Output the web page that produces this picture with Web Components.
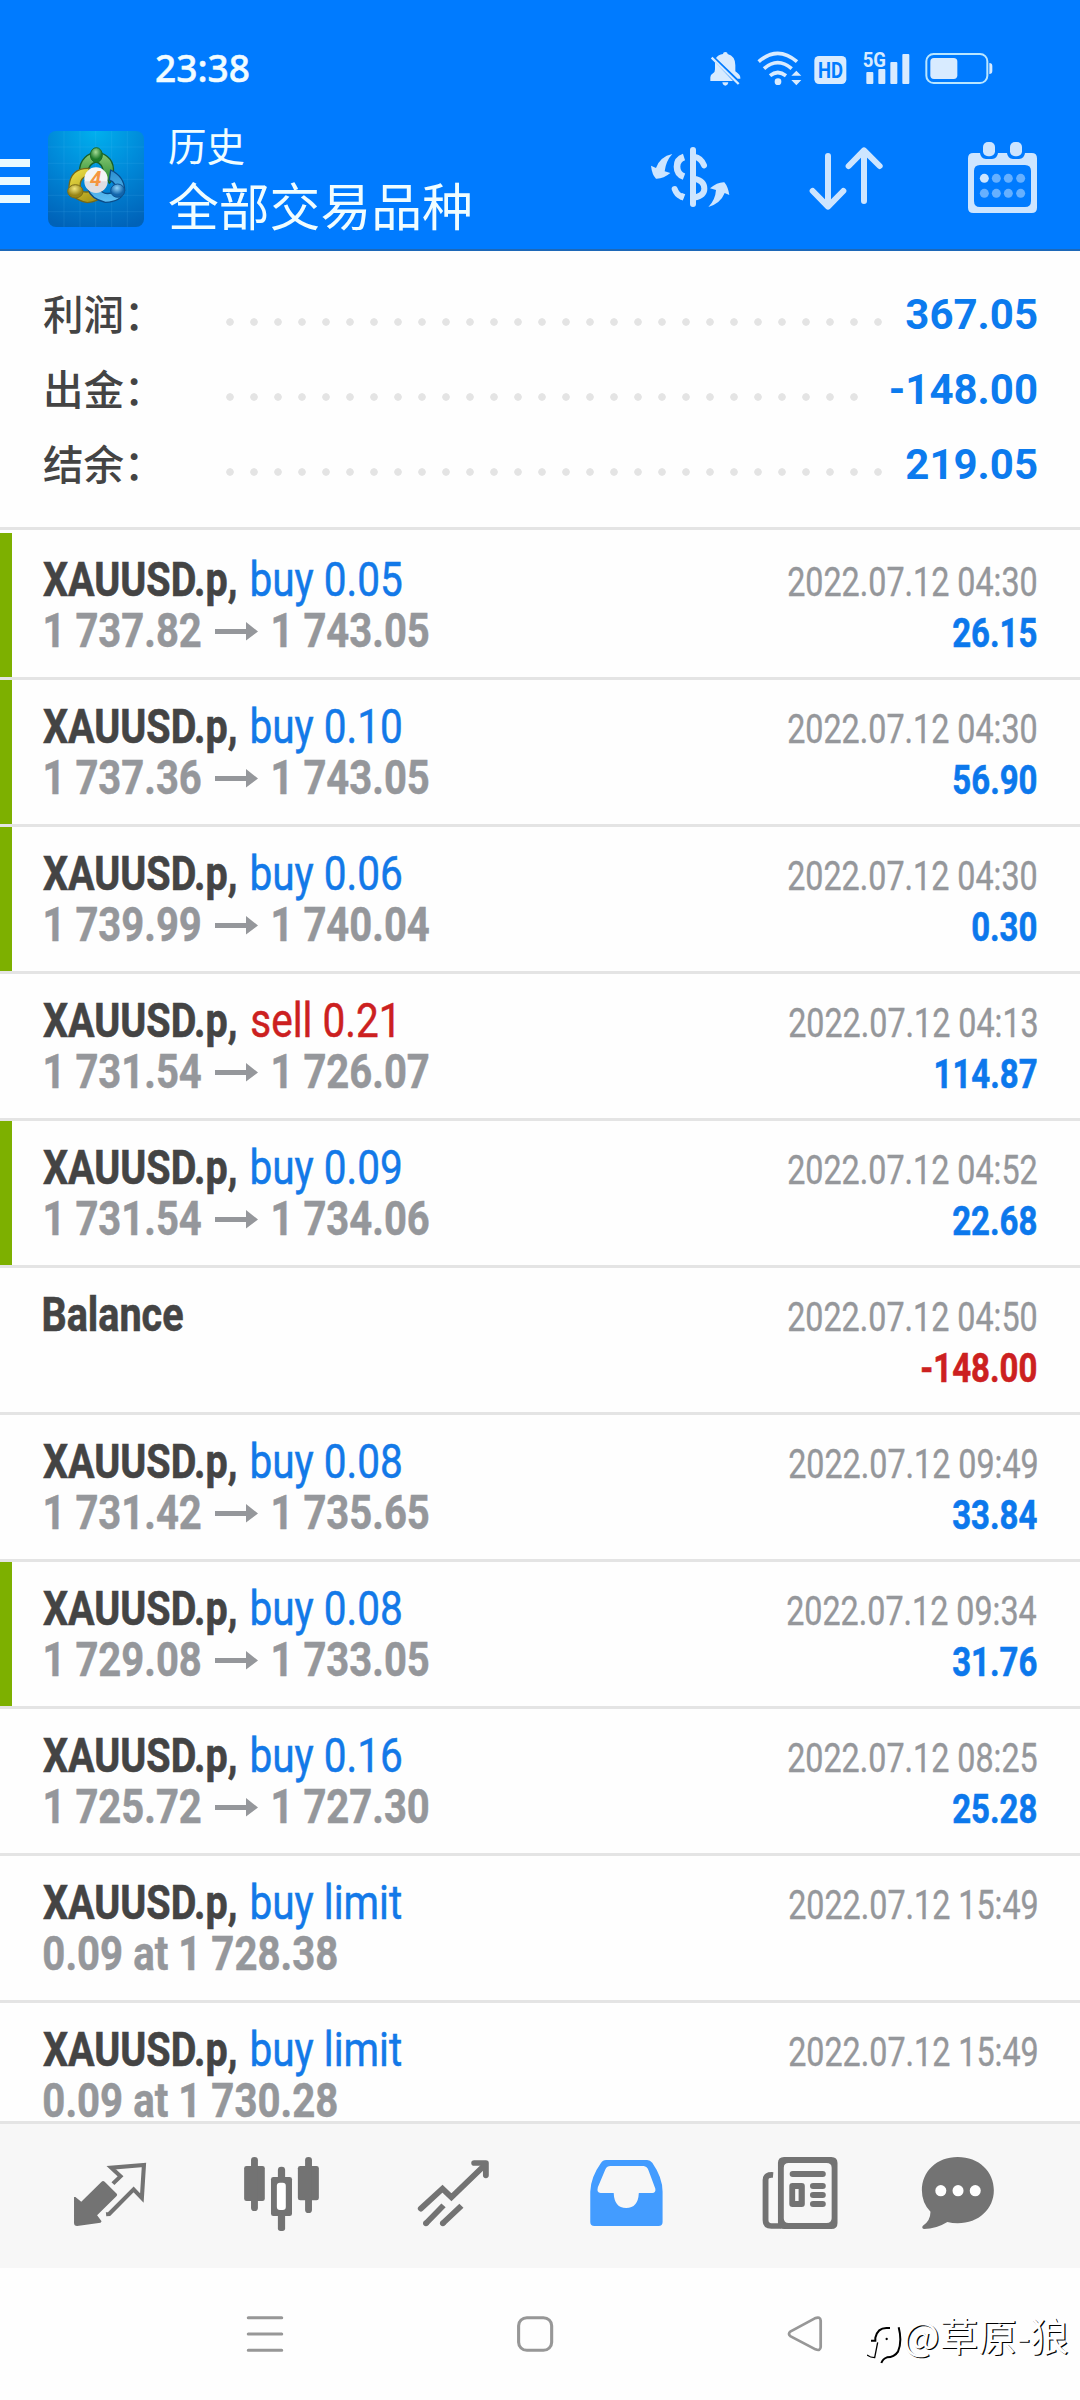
<!DOCTYPE html>
<html lang="zh-CN">
<head>
<meta charset="utf-8">
<title>历史</title>
<style>
html,body{margin:0;padding:0;background:#fefefe}
body{width:1080px;height:2400px;overflow:hidden;font-family:Roboto,"Noto Sans CJK SC",sans-serif}
</style>
</head>
<body>
<trade-app></trade-app>
<script>
/* Text scaled horizontally to a condensed width, anchored on its ink edge. */
const STYLES = {
  symbol: {font:'700 48px Roboto', sample:'XAUUSD.p,', width:193, line:51, color:'#444444', stroke:.6},
  side:   {font:'400 48px Roboto', sample:'buy 0.05', width:150, line:51, color:'inherit', stroke:.5},
  price:  {font:'700 48px Roboto', sample:'1 737.82', width:155.5, line:51, color:'#95979b', stroke:.5},
  note:   {font:'700 48px Roboto', sample:'0.09 at 1 730.28', width:293, line:51, color:'#95979b', stroke:.5},
  date:   {font:'400 40px Roboto', sample:'2022.07.12 04:30', width:248.5, line:51, color:'#95979b', stroke:.4},
  value:  {font:'700 40px Roboto', sample:'26.15', width:83.5, line:51, color:'inherit', stroke:.6},
  clock:  {font:'500 37.5px "Noto Sans"', sample:'23:38', width:92.5, line:44, color:'#f2fcff', stroke:.5}
};
const ctx = document.createElement('canvas').getContext('2d');
const ink = (font, text) => {
  ctx.font = font;
  const m = ctx.measureText(text);
  return {left:-m.actualBoundingBoxLeft, right:m.actualBoundingBoxRight, width:m.actualBoundingBoxLeft + m.actualBoundingBoxRight};
};
customElements.define('fit-text', class extends HTMLElement {
  connectedCallback() {
    const s = STYLES[this.getAttribute('kind')], text = this.getAttribute('text');
    const k = s.width / ink(s.font, s.sample).width, m = ink(s.font, text);
    this.attachShadow({mode:'open'}).innerHTML = `<style>
      :host{display:block;height:${s.line}px;width:${(m.width * k).toFixed(2)}px;color:${s.color};flex:none}
      span{display:inline-block;font:${s.font};line-height:${s.line}px;white-space:pre;transform-origin:0 0;-webkit-text-stroke:${s.stroke}px currentColor;
        transform:translateX(${(m.left * -k).toFixed(2)}px) scaleX(${k.toFixed(4)})}
    </style><span></span>`;
    this.shadowRoot.querySelector('span').textContent = text;
  }
});

customElements.define('status-bar', class extends HTMLElement {
  connectedCallback() {
    this.attachShadow({mode:'open'}).innerHTML = `<style>
      :host{display:flex;height:110px;box-sizing:border-box;padding:46px 0 0 156px}
      svg{display:block;margin-left:458px}
    </style>
    <fit-text kind="clock" text="23:38"></fit-text>
    <svg width="300" height="44" viewBox="260 48 900 132" fill="#d8ebff">
      <path d="M287 84 Q294 74 308 72 Q308 66 315 66 Q322 66 322 72 Q345 78 345 106 V124 Q360 134 360 143 V146 H352 Z"/>
      <path d="M284 96 L338 153 H270 V142 Q270 134 278 130 Q284 127 284 118Z"/>
      <path d="M306 157 H324 Q322 167 315 167 Q308 167 306 157Z"/>
      <path d="M274 83 L355 162" stroke="#d8ebff" stroke-width="7"/>
      <g fill="none" stroke="#d8ebff" stroke-width="11">
        <path d="M415 95 Q472 45 530 95"/><path d="M431 116 Q472 80 514 116"/><path d="M449 137 Q472 118 497 137"/>
      </g>
      <circle cx="473" cy="155" r="10"/><path d="M513 137 L528 122 L543 137Z M513 150 H543 L528 166Z"/>
      <rect x="582" y="78" width="96" height="84" rx="14"/>
      <text x="593" y="144" font-family="Roboto" font-weight="700" font-size="67" fill="#007bff" textLength="75" lengthAdjust="spacingAndGlyphs">HD</text>
      <text x="727" y="110" font-family="Roboto" font-weight="700" font-size="58" textLength="70" lengthAdjust="spacingAndGlyphs">5G</text>
      <rect x="738" y="126" width="21" height="36" rx="3"/><rect x="774" y="117" width="21" height="45" rx="3"/>
      <rect x="810" y="96" width="21" height="66" rx="3"/><rect x="846" y="72" width="21" height="90" rx="3"/>
      <rect x="918" y="72" width="183" height="87" rx="22" fill="none" stroke="#b9e6ff" stroke-width="6"/>
      <rect x="930" y="84" width="81" height="63" rx="11"/><path d="M1107 99 Q1116 99 1116 108 V123 Q1116 132 1107 132Z"/>
    </svg>`;
  }
});

customElements.define('app-logo', class extends HTMLElement {
  connectedCallback() {
    this.attachShadow({mode:'open'}).innerHTML = `<style>:host{display:block;width:96px;height:96px}svg{display:block}</style>
    <svg width="96" height="96" viewBox="54 33 288 288">
      <defs>
        <radialGradient id="bg" cx=".5" cy="0" r="1.05"><stop offset="0" stop-color="#00b0ee"/><stop offset=".5" stop-color="#0088d8"/><stop offset="1" stop-color="#0062b8"/></radialGradient>
        <linearGradient id="g" x2="0" y2="1"><stop offset="0" stop-color="#8fce78"/><stop offset="1" stop-color="#23852f"/></linearGradient>
        <linearGradient id="y" x2=".6" y2="1"><stop offset="0" stop-color="#f1e44a"/><stop offset="1" stop-color="#a89518"/></linearGradient>
        <linearGradient id="b" x2="0" y2="1"><stop offset="0" stop-color="#2b8fd0"/><stop offset="1" stop-color="#5fc0f5"/></linearGradient>
        <radialGradient id="gb" cx=".45" cy=".3"><stop offset="0" stop-color="#a5dc96"/><stop offset="1" stop-color="#1d7a2a"/></radialGradient>
        <radialGradient id="yb" cx=".45" cy=".3"><stop offset="0" stop-color="#f3e77d"/><stop offset="1" stop-color="#978416"/></radialGradient>
        <radialGradient id="bb" cx=".45" cy=".3"><stop offset="0" stop-color="#8fd3fa"/><stop offset="1" stop-color="#1265ac"/></radialGradient>
      </defs>
      <rect x="54" y="33" width="288" height="288" rx="24" fill="url(#bg)"/>
      <path d="M102 33V321M150 33V321M197 33V321M245 33V321M292 33V321M54 81H342M54 130H342M54 178H342M54 226H342M54 275H342" stroke="#6fd0ff" stroke-opacity=".18" stroke-width="2"/>
      <g stroke-linejoin="round" stroke-width="4">
        <path d="M150 170 Q140 112 198 94 Q256 108 250 160 Q248 182 238 190 L222 160 Q216 128 198 126 Q176 132 172 158Z" fill="url(#g)" stroke="#17602a"/>
        <path d="M178 145 Q122 143 117 198 Q118 236 172 248 Q202 246 222 226 L206 200 Q186 222 154 214 Q142 178 172 166Z" fill="url(#y)" stroke="#756818"/>
        <path d="M242 150 Q284 170 284 212 Q274 246 226 247 Q182 236 174 207 L208 208 Q224 228 254 216 Q262 188 238 180Z" fill="url(#b)" stroke="#0b4c89"/>
        <ellipse cx="199" cy="105" rx="18" ry="22" fill="url(#gb)" stroke="#1d6a29" stroke-width="3"/>
        <ellipse cx="136" cy="214" rx="23" ry="20" fill="url(#yb)" stroke="#7d6d16" stroke-width="3"/>
        <ellipse cx="263" cy="212" rx="21" ry="20" fill="url(#bb)" stroke="#0d5494" stroke-width="3"/>
      </g>
      <circle cx="198" cy="177" r="35" fill="#f4f4f6"/><path d="M163 184H233A35 35 0 0 1 163 184Z" fill="#dedde1"/>
      <text x="197" y="197" text-anchor="middle" font-family="Roboto" font-style="italic" font-weight="700" font-size="62" fill="#f5953f">4</text>
    </svg>`;
  }
});

customElements.define('app-header', class extends HTMLElement {
  connectedCallback() {
    this.attachShadow({mode:'open'}).innerHTML = `<style>
      :host{display:block;height:251px;box-sizing:border-box;background:#007bff;border-bottom:2px solid #1d68b8}
      .bar{display:flex;align-items:flex-start;height:139px}
      .menu{flex:none;width:48px;padding-top:49px;display:flex;flex-direction:column;gap:10px}
      .menu i{display:block;width:30px;height:8px;background:#eafaff}
      app-logo{margin-top:21px;flex:none}
      .titles{flex:none;margin-left:24px;width:460px;color:#f0fdff;font-family:"Noto Sans CJK SC",sans-serif}
      .t1{font-size:38.5px;line-height:50px;padding-top:9px}
      .t2{font-size:50.8px;line-height:60px;margin-top:5px}
      svg{display:block;flex:none;margin-top:26px}
    </style>
    <status-bar></status-bar>
    <div class="bar">
      <div class="menu"><i></i><i></i><i></i></div>
      <app-logo></app-logo>
      <div class="titles"><div class="t1">历史</div><div class="t2">全部交易品种</div></div>
      <svg width="440" height="84" viewBox="24 318 1320 252" fill="#cde5ff" stroke-linecap="round" stroke-linejoin="round">
        <path d="M157 372 Q120 380 108 414 L93 407 Q96 434 108 446 Q130 447 151 429 L134 424 Q138 392 157 372Z"/>
        <path d="M265 531 Q302 520 314 489 L328 495 Q324 470 313 457 Q292 456 270 475 L288 480 Q286 510 265 531Z"/>
        <g fill="none" stroke="#cde5ff" stroke-width="18">
          <path d="M219 360V522"/><path d="M222 380Q244 384 252 406"/>
          <path d="M222 446Q253 452 253 476Q253 497 222 503"/><path d="M164 477Q170 494 183 499"/>
          <path d="M192 381Q171 388 171 410Q171 432 192 440M182 498L192 502" stroke-linecap="butt" stroke-width="20"/>
          <path d="M624 378V529M578 483L624 530L670 483M732 513V362M686 408L732 361L779 408"/>
        </g>
        <path fill-rule="evenodd" d="M1060 369H1080Q1082 386 1098 387H1116Q1132 386 1134 369H1161Q1163 386 1179 387H1197Q1213 386 1215 369H1235Q1251 369 1251 385V533Q1251 549 1235 549H1060Q1044 549 1044 533V385Q1044 369 1060 369ZM1080 405Q1062 405 1062 423V513Q1062 531 1080 531H1215Q1233 531 1233 513V423Q1233 405 1215 405Z"/>
        <rect x="1089" y="336" width="36" height="43" rx="15"/><rect x="1170" y="336" width="36" height="43" rx="15"/>
        <circle cx="1093" cy="445" r="13.5"/>
        <g fill="#66b0ff"><circle cx="1129" cy="445" r="13.5"/><circle cx="1165" cy="445" r="13.5"/><circle cx="1202" cy="445" r="13.5"/>
        <circle cx="1093" cy="490" r="13.5"/><circle cx="1129" cy="490" r="13.5"/><circle cx="1165" cy="490" r="13.5"/><circle cx="1202" cy="490" r="13.5"/></g>
      </svg>
    </div>`;
  }
});

customElements.define('summary-row', class extends HTMLElement {
  connectedCallback() {
    this.attachShadow({mode:'open'}).innerHTML = `<style>
      :host{display:flex;align-items:center;height:75px;padding:0 42px 0 43px}
      .label{flex:none;width:175px;margin-top:-6px;font:500 40.5px/60px "Noto Sans CJK SC",sans-serif;color:#444}
      .dots{flex:none;width:${this.getAttribute('dots') * 24}px;height:24px;margin-top:13px;background:radial-gradient(circle at center,#e4e4e4 3.4px,transparent 4.1px) 0 0/24px 24px}
      .value{flex:1;margin-top:-2px;text-align:right;font:700 42px/60px Roboto;color:#0c7bee}
    </style>
    <div class="label"><slot></slot></div><div class="dots"></div><div class="value">${this.getAttribute('value')}</div>`;
  }
});

customElements.define('deal-row', class extends HTMLElement {
  connectedCallback() {
    const a = n => this.getAttribute(n);
    const t = (kind, text, cls = '') => text ? `<fit-text class="${cls}" kind="${kind}" text="${text}"></fit-text>` : '';
    this.attachShadow({mode:'open'}).innerHTML = `<style>
      :host{display:flex;height:147px;box-sizing:border-box;border-bottom:3px solid #e4e4e4;background:linear-gradient(${a('mark') !== null ? '#7db000,#7db000' : 'transparent,transparent'}) 0 0/12px 144px no-repeat}
      .left{flex:1;padding:21px 0 0 ${a('side') ? 42.5 : 44}px}
      .line{display:flex;height:51px}
      .side{margin-left:16px;color:${a('side')?.startsWith('sell') ? '#cc2020' : '#1379e8'}}
      .prices{margin-left:2.5px}
      .notes{margin-left:1.5px}
      .from{flex:0 0 156px}
      svg{display:block;margin:17px 15px 0 14px;flex:none}
      .right{display:flex;flex-direction:column;align-items:flex-end;padding:24px 43.5px 0 0}
      .value{color:${a('value')?.startsWith('-') ? '#cc2020' : '#0c78ec'}}
    </style>
    <div class="left">
      <div class="line">${t('symbol', a('name'))}${t('side', a('side'), 'side')}</div>
      ${a('from') ? `<div class="line prices">${t('price', a('from'), 'from')}<svg width="43" height="19" viewBox="0 0 43 19" fill="#95979b"><path d="M0 7H31V0L43 9.5L31 18.5V12H0Z"/></svg>${t('price', a('to'))}</div>` : ''}
      ${a('note') ? `<div class="line notes">${t('note', a('note'))}</div>` : ''}
    </div>
    <div class="right">${t('date', a('date'))}${t('value', a('value'), 'value')}</div>`;
  }
});

customElements.define('tab-bar', class extends HTMLElement {
  connectedCallback() {
    const cell = (x, body) => `<svg width="172" height="144" viewBox="${x} 72 499.5 432" preserveAspectRatio="none" fill="#737373">${body}</svg>`;
    this.attachShadow({mode:'open'}).innerHTML = `<style>
      :host{display:flex;height:147px;box-sizing:border-box;padding-left:24px;border-top:3px solid #e4e4e4;background:#f7f7f7}
      svg{display:block;flex:none}
    </style>
    ${cell(69.7, `<path d="M215 291H219L236 305L295 245Q299 241 304 245L339 281Q342 285 338 289L282 346L295 364L292 368L224 378Q215 378 215 369Z"/>
      <path d="M328 251L350 229L323 203L418 195L412 294L388 268L317 342L308 343" fill="none" stroke="#737373" stroke-width="12"/>`)}
    ${cell(569.2, `<rect x="709" y="198" width="60" height="105" rx="7"/><rect x="729" y="171" width="20" height="162" rx="10"/>
      <rect x="865" y="198" width="61" height="103" rx="7"/><rect x="886" y="171" width="20" height="168" rx="10"/>
      <rect x="807" y="200" width="21" height="45" rx="10"/><rect x="807" y="340" width="21" height="53" rx="8"/>
      <rect x="787" y="231" width="61" height="117" rx="7"/><rect x="804" y="248" width="26" height="82" rx="9" fill="#fff"/>`)}
    ${cell(1068.7, `<g fill="none" stroke="#737373" stroke-width="17" stroke-linecap="round"><path d="M1222 326L1285 266L1311 292L1405 198" stroke-linejoin="miter"/><path d="M1377 189H1411V226" stroke-linejoin="round"/></g>
      <g stroke="#737373" stroke-width="17"><path d="M1237 370L1288 316M1286 370L1340 317"/></g><circle cx="1237" cy="370" r="8.5"/><circle cx="1286" cy="370" r="8.5"/>`)}
    ${cell(0, `<path fill="#439cff" fill-rule="evenodd" d="M192 180H311Q320 180 326 188Q356 232 356 275V366Q356 378 344 378H158Q146 378 146 366V275Q147 232 177 189Q182 180 192 180ZM204 198Q195 198 190 208L168 262Q164 279 176 279H214Q216 324 250 324Q285 324 287 279H326Q337 278 335 266L315 211Q311 199 301 198Z"/>`)}
    ${cell(499.5, `<path d="M677 225Q655 223 655 240V360Q655 378 672 378H700" fill="none" stroke="#737373" stroke-width="17"/>
      <path fill-rule="evenodd" d="M709 171H846Q864 171 864 189V369Q864 387 846 387H709Q691 387 691 369V189Q691 171 709 171ZM722 189Q708 189 708 203V355Q708 369 722 369H832Q847 369 847 355V203Q847 189 832 189Z"/>
      <rect x="725" y="213" width="105" height="18" rx="9"/><path fill-rule="evenodd" d="M733 249H760Q769 249 769 258V312Q769 321 760 321H733Q724 321 724 312V258Q724 249 733 249ZM741 267V303H751V267Z"/>
      <rect x="784" y="249" width="46" height="18" rx="9"/><rect x="784" y="276" width="46" height="18" rx="9"/><rect x="784" y="303" width="46" height="18" rx="9"/>`)}
    ${cell(999, `<path d="M1213 171C1275 171 1318 215 1318 271C1318 326 1275 370 1213 370Q1197 370 1183 366Q1150 387 1115 387Q1107 384 1112 377Q1134 362 1134 335Q1109 310 1109 271C1109 215 1152 171 1213 171Z"/><g fill="#fff"><ellipse cx="1164" cy="272" rx="16" ry="17"/><ellipse cx="1214" cy="272" rx="16" ry="17"/><ellipse cx="1264" cy="272" rx="16" ry="17"/></g>`)}`;
  }
});

customElements.define('system-nav', class extends HTMLElement {
  connectedCallback() {
    const cell = (x, body) => `<svg width="270" height="132" viewBox="${x} 504 784 396" preserveAspectRatio="none" fill="none" stroke="#979797" stroke-width="9" stroke-linecap="round" stroke-linejoin="round">${body}</svg>`;
    this.attachShadow({mode:'open'}).innerHTML = `<style>
      :host{display:flex;height:132px;padding-left:130px;background:#fefefe;position:relative}
      svg{display:block;flex:none}
      .mark{position:absolute;left:867px;top:50px;display:flex;align-items:flex-start;color:#fff;
        font:400 38.6px/44px "Noto Sans CJK SC",sans-serif;text-shadow:1.3px 1.3px 0 #000;white-space:nowrap}
      .mark svg{margin-top:7px}
      .mark span{margin-left:1px;margin-top:-6px}
    </style>
    ${cell(377.5, '<path d="M721 653H818M721 702H818M721 751H818"/>')}
    ${cell(1161.6, '<rect x="1506" y="653" width="96" height="98" rx="24"/>')}
    ${cell(377.5, '<path d="M728 694L798 655Q814 648 815 662V741Q814 754 800 748L728 709Q718 702 728 694Z" stroke-width="8"/>')}
    <div class="mark"><svg width="35" height="40" viewBox="22 60 105 120" fill="none" stroke="#000" stroke-linecap="butt">
      <path d="M34 107H47V98Q54 69 80 69H91" stroke-width="6"/><path d="M117 67Q128 110 115 140Q104 157 82 157Q70 161 65 174" stroke-width="6"/>
      <path d="M54 112L45 158Q32 158 22 150" stroke-width="4"/><circle cx="81" cy="102" r="3.5" fill="#000" stroke="none"/></svg><span>@草原-狼</span></div>`;
  }
});

customElements.define('trade-app', class extends HTMLElement {
  connectedCallback() {
    const rows = [
      ['buy 0.05','1 737.82','1 743.05','04:30','26.15',1],
      ['buy 0.10','1 737.36','1 743.05','04:30','56.90',1],
      ['buy 0.06','1 739.99','1 740.04','04:30','0.30',1],
      ['sell 0.21','1 731.54','1 726.07','04:13','114.87',0],
      ['buy 0.09','1 731.54','1 734.06','04:52','22.68',1],
      null,
      ['buy 0.08','1 731.42','1 735.65','09:49','33.84',0],
      ['buy 0.08','1 729.08','1 733.05','09:34','31.76',1],
      ['buy 0.16','1 725.72','1 727.30','08:25','25.28',0]
    ].map(r => r ? `<deal-row name="XAUUSD.p," side="${r[0]}" from="${r[1]}" to="${r[2]}" date="2022.07.12 ${r[3]}" value="${r[4]}" ${r[5] ? 'mark' : ''}></deal-row>`
      : '<deal-row name="Balance" date="2022.07.12 04:50" value="-148.00"></deal-row>').join('')
      + ['0.09 at 1 728.38','0.09 at 1 730.28'].map(n => `<deal-row name="XAUUSD.p," side="buy limit" note="${n}" date="2022.07.12 15:49"></deal-row>`).join('');
    this.attachShadow({mode:'open'}).innerHTML = `<style>
      :host{display:flex;flex-direction:column;width:1080px;height:2400px;background:#fefefe}
      app-header,tab-bar,system-nav{flex:none}
      .summary{height:276px;padding-top:27px;box-sizing:border-box;flex:none}
      .list{height:1594px;box-sizing:border-box;overflow:hidden;border-top:3px solid #e4e4e4;padding-top:3px}
    </style>
    <app-header></app-header>
    <div class="summary"><summary-row value="367.05" dots="28">利润：</summary-row><summary-row value="-148.00" dots="27">出金：</summary-row><summary-row value="219.05" dots="28">结余：</summary-row></div>
    <div class="list">${rows}</div>
    <tab-bar></tab-bar>
    <system-nav></system-nav>`;
  }
});
</script>
</body>
</html>
